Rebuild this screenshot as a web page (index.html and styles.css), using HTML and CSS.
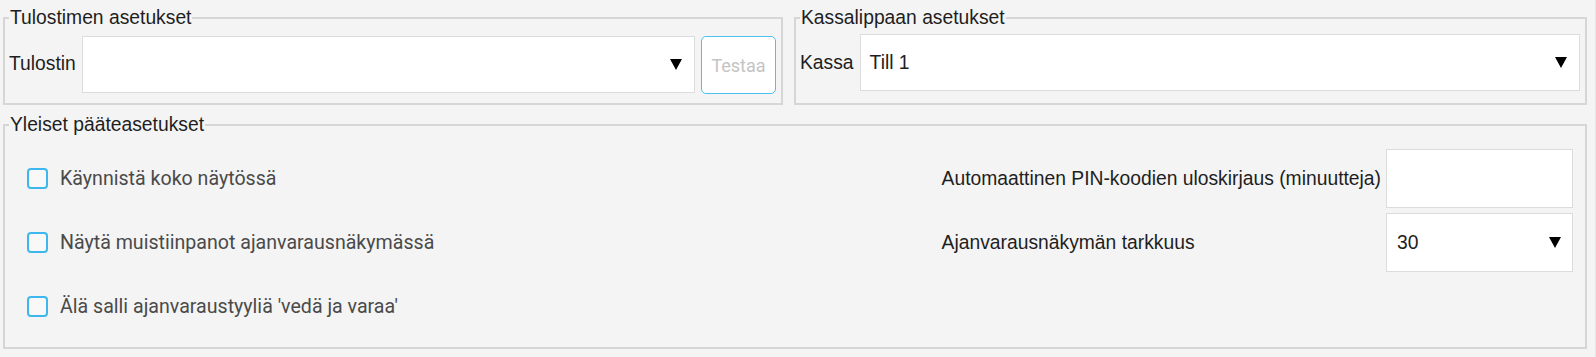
FILE: index.html
```html
<!DOCTYPE html>
<html lang="fi">
<head>
<meta charset="utf-8">
<title>Asetukset</title>
<link rel="stylesheet" href="styles.css">
</head>
<body>
<div class="page">
  <div class="top-row">
    <fieldset class="group group-printer">
      <legend>Tulostimen asetukset</legend>
      <div class="field-row">
        <label class="field-label">Tulostin</label>
        <div class="select">
          <span class="select-value"></span>
          <svg class="caret" viewBox="0 0 12 11" width="12" height="11"><polygon points="0,0 12,0 6,11" fill="#000"/></svg>
        </div>
        <button class="btn-test" type="button">Testaa</button>
      </div>
    </fieldset>
    <fieldset class="group group-till">
      <legend>Kassalippaan asetukset</legend>
      <div class="field-row">
        <label class="field-label">Kassa</label>
        <div class="select">
          <span class="select-value">Till 1</span>
          <svg class="caret" viewBox="0 0 12 11" width="12" height="11"><polygon points="0,0 12,0 6,11" fill="#000"/></svg>
        </div>
      </div>
    </fieldset>
  </div>
  <fieldset class="group group-general">
    <legend>Yleiset pääteasetukset</legend>
    <div class="general">
      <div class="checks">
        <div class="check-row"><span class="checkbox"></span><span class="check-label">Käynnistä koko näytössä</span></div>
        <div class="check-row"><span class="checkbox"></span><span class="check-label">Näytä muistiinpanot ajanvarausnäkymässä</span></div>
        <div class="check-row"><span class="checkbox"></span><span class="check-label">Älä salli ajanvaraustyyliä 'vedä ja varaa'</span></div>
      </div>
      <div class="settings">
        <span class="setting-label">Automaattinen PIN-koodien uloskirjaus (minuutteja)</span>
        <div class="input"></div>
        <span class="setting-label">Ajanvarausnäkymän tarkkuus</span>
        <div class="select select-small">
          <span class="select-value">30</span>
          <svg class="caret" viewBox="0 0 12 11" width="12" height="11"><polygon points="0,0 12,0 6,11" fill="#000"/></svg>
        </div>
      </div>
    </div>
  </fieldset>
</div>
</body>
</html>
```
FILE: styles.css
```css
html, body {
  margin: 0;
  padding: 0;
  background: #f4f4f4;
}

body {
  font-family: "Liberation Sans", Arial, sans-serif;
  font-size: 19.3px;
  color: #1e1e1e;
  width: 1596px;
  height: 357px;
  overflow: hidden;
  box-sizing: border-box;
  border-right: 1px solid #e6e6e6;
}

.page {
  padding: 7px 8px 0 3px;
}

.top-row {
  display: flex;
  gap: 11px;
}

.group {
  margin: 0;
  min-width: 0;
  border: 2px solid #d6d6d6;
  padding: 5px 5px 9px 4px;
}

.group legend {
  padding: 0 1px;
  font-size: 19.3px;
  line-height: 22px;
  color: #1e1e1e;
}

.group-printer {
  width: 780px;
  box-sizing: border-box;
  flex: none;
}

.group-till {
  flex: 1;
}

.field-row {
  display: flex;
  align-items: center;
  gap: 6px;
}

.field-label {
  line-height: 22px;
}

.select {
  flex: 1;
  height: 57px;
  box-sizing: border-box;
  background: #fff;
  border: 1px solid #dcdcdc;
  display: flex;
  align-items: center;
  padding: 0 12px 0 9px;
}

.select-value {
  flex: 1;
  line-height: 22px;
}

.caret {
  display: block;
  flex: none;
}

.btn-test {
  flex: none;
  width: 75px;
  height: 58px;
  margin-top: 2px;
  box-sizing: border-box;
  background: #fff;
  border: 1px solid #4cbff0;
  border-radius: 5px;
  font-family: Roboto, "Liberation Sans", sans-serif;
  font-size: 18px;
  color: #c4c4c4;
  padding: 0;
}

.group-general {
  margin-top: 9px;
  padding: 13px 5px 11px 4px;
}

.general {
  display: flex;
  justify-content: space-between;
}

.checks {
  display: flex;
  flex-direction: column;
  gap: 5px;
  padding-left: 18px;
}

.check-row {
  height: 59px;
  display: flex;
  align-items: center;
  gap: 12px;
}

.checkbox {
  width: 21px;
  height: 21px;
  box-sizing: border-box;
  border: 2px solid #3db7ee;
  border-radius: 4px;
  background: #f8f8f8;
}

.check-label {
  font-family: Roboto, "Liberation Sans", sans-serif;
  font-size: 19.6px;
  color: #4a4a4a;
}

.settings {
  display: grid;
  grid-template-columns: auto 187px;
  grid-auto-rows: 59px;
  column-gap: 5px;
  row-gap: 5px;
  align-items: center;
  margin-right: 7px;
}

.input {
  height: 59px;
  box-sizing: border-box;
  background: #fff;
  border: 1px solid #dcdcdc;
}

.select-small {
  height: 59px;
  padding: 0 11px 0 10px;
}
```
